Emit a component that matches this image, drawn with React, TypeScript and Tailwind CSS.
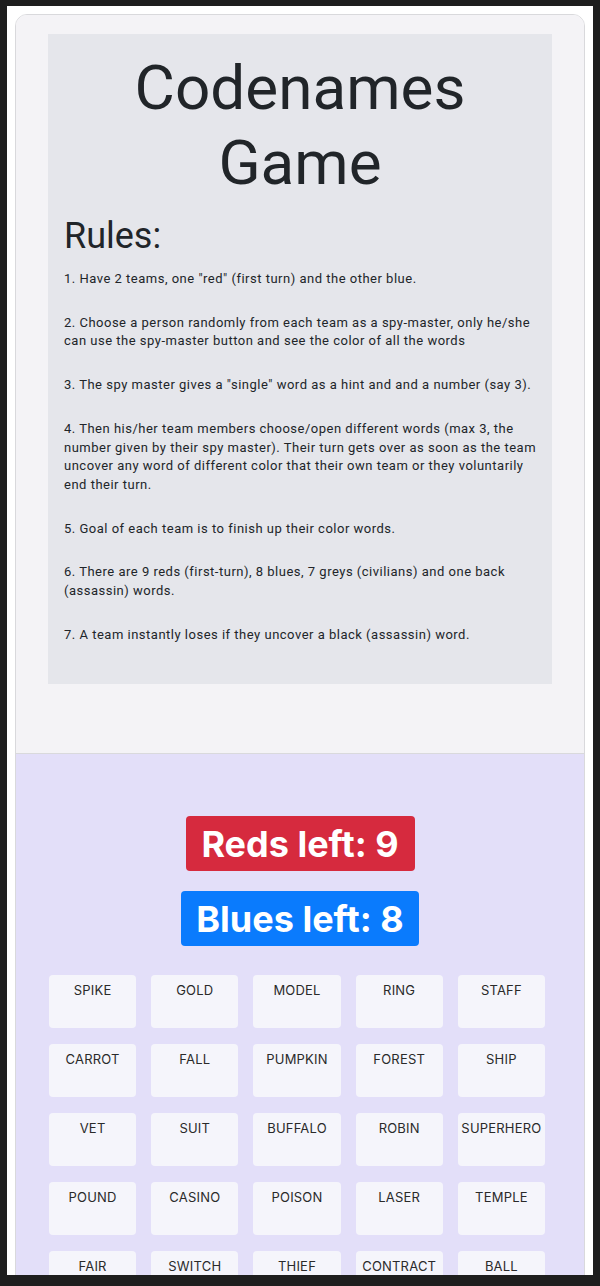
const rules = [
  '1. Have 2 teams, one "red" (first turn) and the other blue.',
  "2. Choose a person randomly from each team as a spy-master, only he/she can use the spy-master button and see the color of all the words",
  '3. The spy master gives a "single" word as a hint and and a number (say 3).',
  "4. Then his/her team members choose/open different words (max 3, the number given by their spy master). Their turn gets over as soon as the team uncover any word of different color that their own team or they voluntarily end their turn.",
  "5. Goal of each team is to finish up their color words.",
  "6. There are 9 reds (first-turn), 8 blues, 7 greys (civilians) and one back (assassin) words.",
  "7. A team instantly loses if they uncover a black (assassin) word.",
];

const words = [
  "SPIKE", "GOLD", "MODEL", "RING", "STAFF",
  "CARROT", "FALL", "PUMPKIN", "FOREST", "SHIP",
  "VET", "SUIT", "BUFFALO", "ROBIN", "SUPERHERO",
  "POUND", "CASINO", "POISON", "LASER", "TEMPLE",
  "FAIR", "SWITCH", "THIEF", "CONTRACT", "BALL",
];

export default function App() {
  return (
    <div className="h-[1286px] overflow-hidden bg-[#1e1e1e] px-[7px] pt-[6px] font-['Roboto',sans-serif] text-[#212529]">
      <div className="h-[1269px] overflow-hidden bg-white px-[8px] pt-[8px]">
        <div className="overflow-hidden rounded-t-[12px] border border-[#d9d9dc]">
          <div className="bg-[#f4f3f6] px-[32px] pt-[19px] pb-[69px]">
            <div className="bg-[#e5e6eb] pl-[16px] pr-[12px] pt-[16px] pb-[15px]">
              <h1 className="pr-[4px] text-center text-[62px] leading-[75px] font-normal">
                Codenames
                <br />
                Game
              </h1>
              <h2 className="mt-[14px] text-[36px] leading-[44px]">Rules:</h2>
              <div className="mt-[12px] text-[13px] leading-[18.7px] tracking-[0.5px]">
                {rules.map((r) => (
                  <p key={r} className="mb-[25px]">
                    {r}
                  </p>
                ))}
              </div>
            </div>
          </div>
          <div className="h-[600px] border-t border-[#d9d9dc] bg-[#e3dff9] pt-[62px] font-['Inter',sans-serif]">
            <div className="flex flex-col items-center gap-[20px]">
              <div className="flex h-[55px] w-[229px] items-center justify-center rounded-[4px] bg-[#d62a3e] text-[36px] font-bold text-white">
                Reds left: 9
              </div>
              <div className="flex h-[55px] w-[238px] items-center justify-center rounded-[4px] bg-[#0a7bfd] text-[36px] font-bold text-white">
                Blues left: 8
              </div>
            </div>
            <div className="mt-[29px] ml-[33px] grid w-[496px] grid-cols-5 gap-x-[15px] gap-y-[16px]">
              {words.map((w) => (
                <div
                  key={w}
                  className="h-[53px] rounded-[4px] bg-[#f5f5fb] pt-[6px] text-center text-[13px] leading-[18px] tracking-[0.2px] text-[#2a2a2a]"
                >
                  {w}
                </div>
              ))}
            </div>
          </div>
        </div>
      </div>
    </div>
  );
}
